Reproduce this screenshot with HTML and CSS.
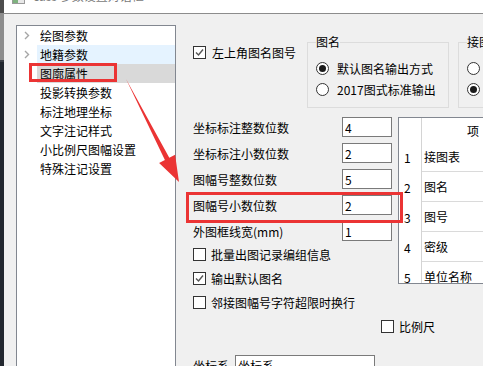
FILE: index.html
```html
<!DOCTYPE html>
<html lang="zh-CN">
<head>
    <meta charset="UTF-8">
    <title>cass 参数设置对话框</title>
    <link rel="stylesheet" href="styles.css">
</head>
<body>

    <div class="screen">
        <!-- desktop taskbar edge -->
        <div class="taskbar">
            <div class="taskbar-top"></div>
            <div class="taskbar-mid"></div>
        </div>

        <div class="window">
            <div class="titlebar">
                <span class="app-icon"></span>
                <span class="title">cass 参数设置对话框</span>
            </div>

            <div class="dialog">
                <!-- Left tree -->
                <ul class="tree">
                    <li><span class="twisty"><svg width="6" height="9" viewBox="0 0 6 9"><polyline points="1,1 4.5,4.5 1,8" fill="none" stroke="#a6a6a6" stroke-width="1.4"/></svg></span><span class="node-label">绘图参数</span></li>
                    <li class="hover"><span class="twisty"><svg width="6" height="9" viewBox="0 0 6 9"><polyline points="1,1 4.5,4.5 1,8" fill="none" stroke="#a6a6a6" stroke-width="1.4"/></svg></span><span class="node-label">地籍参数</span></li>
                    <li class="selected"><span class="twisty"></span><span class="node-label">图廓属性</span></li>
                    <li><span class="twisty"></span><span class="node-label">投影转换参数</span></li>
                    <li><span class="twisty"></span><span class="node-label">标注地理坐标</span></li>
                    <li><span class="twisty"></span><span class="node-label">文字注记样式</span></li>
                    <li><span class="twisty"></span><span class="node-label">小比例尺图幅设置</span></li>
                    <li><span class="twisty"></span><span class="node-label">特殊注记设置</span></li>
                </ul>

                <!-- Settings page -->
                <div class="settings">
                    <div class="top-row">
                        <label class="check corner"><span class="box"><svg width="11" height="11" viewBox="0 0 11 11"><polyline points="2,5.5 4.5,8 9,2.5" fill="none" stroke="#555" stroke-width="1.4"/></svg></span>左上角图名图号</label>

                        <fieldset class="group name-group">
                            <legend>图名</legend>
                            <label class="radio"><span class="dot on"></span>默认图名输出方式</label>
                            <label class="radio"><span class="dot"></span>2017图式标准输出</label>
                        </fieldset>

                        <fieldset class="group join-group">
                            <legend>接图表</legend>
                            <label class="radio"><span class="dot"></span></label>
                            <label class="radio"><span class="dot on"></span></label>
                        </fieldset>
                    </div>

                    <div class="mid">
                        <div class="fields">
                            <div class="num-fields">
                                <div class="field"><span class="field-label">坐标标注整数位数</span><input class="text-input" type="text" value="4" readonly></div>
                                <div class="field"><span class="field-label">坐标标注小数位数</span><input class="text-input" type="text" value="2" readonly></div>
                                <div class="field"><span class="field-label">图幅号整数位数</span><input class="text-input" type="text" value="5" readonly></div>
                                <div class="field"><span class="field-label">图幅号小数位数</span><input class="text-input" type="text" value="2" readonly></div>
                                <div class="field"><span class="field-label">外图框线宽(mm)</span><input class="text-input" type="text" value="1" readonly></div>
                            </div>
                            <div class="checks">
                                <label class="check"><span class="box"></span>批量出图记录编组信息</label>
                                <label class="check"><span class="box"><svg width="11" height="11" viewBox="0 0 11 11"><polyline points="2,5.5 4.5,8 9,2.5" fill="none" stroke="#555" stroke-width="1.4"/></svg></span>输出默认图名</label>
                                <label class="check"><span class="box"></span>邻接图幅号字符超限时换行</label>
                            </div>
                        </div>

                        <div class="table-wrap">
                            <div class="grid">
                                <div class="rn"></div><div class="cell head">项</div>
                                <div class="rn">1</div><div class="cell">接图表</div>
                                <div class="rn">2</div><div class="cell">图名</div>
                                <div class="rn">3</div><div class="cell">图号</div>
                                <div class="rn">4</div><div class="cell">密级</div>
                                <div class="rn">5</div><div class="cell">单位名称</div>
                            </div>
                        </div>
                    </div>

                    <label class="check scale"><span class="box"></span>比例尺</label>

                    <div class="coord-row">
                        <span>坐标系</span>
                        <input class="text-input wide" type="text" value="坐标系" readonly>
                    </div>
                </div>
            </div>
        </div>
    </div>

    <!-- screenshot annotations -->
    <svg class="marks" width="483" height="366" viewBox="0 0 483 366">
        <rect x="30.5" y="64.5" width="85" height="16" fill="none" stroke="#eb3434" stroke-width="3"/>
        <rect x="187.5" y="193.5" width="214" height="28" fill="none" stroke="#eb3434" stroke-width="3"/>
        <polygon points="126,79 169.3,157.8 175.1,154.8 179,182 159.1,163 164.9,160" fill="#eb3434"/>
    </svg>

</body>
</html>
```

FILE: styles.css
```css
/* Global */
* {
    box-sizing: border-box;
}

html, body {
    margin: 0;
    padding: 0;
}

body {
    position: relative;
    width: 483px;
    height: 366px;
    overflow: hidden;
    background-color: #f0f0f0;
    font-family: "Noto Sans CJK SC", "Microsoft YaHei", sans-serif;
    font-size: 12px;
    color: #000;
}

.screen {
    display: flex;
    height: 366px;
}

/* Taskbar edge */
.taskbar {
    flex: none;
    width: 4px;
    background-color: #22272f;
}

.taskbar-top {
    height: 13px;
    background-color: #4d4d4d;
}

.taskbar-mid {
    height: 49px;
    background-color: #8d8d8d;
    border-bottom: 2px solid #3b3f46;
}

/* Window */
.window {
    flex: 1;
    min-width: 0;
    display: flex;
    flex-direction: column;
}

.titlebar {
    flex: none;
    height: 14px;
    padding-left: 8px;
    background-color: #fff;
    border-bottom: 1px solid #8c8c8c;
    display: flex;
    align-items: flex-start;
    overflow: hidden;
}

.app-icon {
    flex: none;
    width: 13px;
    height: 4px;
    border: 1px solid #9a9a9a;
    border-top: none;
    background: linear-gradient(90deg, #7fb27f 0 5px, #e8e8e8 5px);
}

.title {
    margin-left: 8px;
    margin-top: -12px;
    line-height: 16px;
    color: #7a7a7a;
    white-space: nowrap;
}

.dialog {
    flex: 1;
    display: flex;
    padding: 11px 0 0 12px;
    min-height: 0;
}

/* Tree */
.tree {
    flex: none;
    width: 160px;
    height: 360px;
    margin: 0;
    padding: 0;
    list-style: none;
    background-color: #fff;
    border: 1px solid #828790;
}

.tree li {
    display: flex;
    height: 19px;
    line-height: 19px;
    white-space: nowrap;
}

.twisty {
    flex: none;
    width: 20px;
    padding-left: 7px;
    display: flex;
    align-items: center;
}

.twisty svg {
    display: block;
}

.node-label {
    flex: 1;
    padding-left: 3px;
}

.tree li.hover .node-label {
    background-color: #e5f3ff;
}

.tree li.selected .node-label {
    background-color: #d9d9d9;
}

/* Settings page */
.settings {
    flex: 1;
    min-width: 0;
    padding: 9px 0 0 17px;
}

.top-row {
    display: flex;
    align-items: flex-start;
}

.check {
    display: flex;
    align-items: center;
    gap: 5px;
    height: 24px;
    white-space: nowrap;
}

.box {
    flex: none;
    width: 13px;
    height: 13px;
    border: 1px solid #333;
    background-color: #fff;
    display: flex;
    align-items: center;
    justify-content: center;
}

.box svg {
    display: block;
}

.corner {
    flex: none;
    width: 114px;
    height: 16px;
    margin-top: 10px;
    gap: 6px;
}

.group {
    flex: none;
    min-width: 0;
    margin: 0;
    padding: 8px 0 7px 8px;
    border: 1px solid #dcdcdc;
}

.group legend {
    padding: 0;
    line-height: 16px;
    white-space: nowrap;
}

.name-group {
    width: 142px;
}

.join-group {
    width: 120px;
    margin-left: 9px;
}

.radio {
    display: flex;
    align-items: center;
    gap: 8px;
    height: 21px;
    white-space: nowrap;
}

.dot {
    flex: none;
    width: 13px;
    height: 13px;
    border: 1px solid #333;
    border-radius: 50%;
    background-color: #fff;
    display: flex;
    align-items: center;
    justify-content: center;
}

.dot.on::after {
    content: "";
    width: 7px;
    height: 7px;
    border-radius: 50%;
    background-color: #1a1a1a;
}

/* Numeric fields + table */
.mid {
    display: flex;
    align-items: flex-start;
    margin-top: 9px;
}

.fields {
    flex: none;
    width: 199px;
}

.num-fields {
    display: grid;
    row-gap: 6px;
}

.field {
    display: flex;
    align-items: center;
    height: 20px;
}

.field-label {
    flex: none;
    width: 149px;
    white-space: nowrap;
}

.text-input {
    width: 50px;
    height: 20px;
    margin: 0;
    padding: 0 2px;
    border: 1px solid #7a7a7a;
    border-radius: 0;
    background-color: #fff;
    font: inherit;
    line-height: 18px;
    color: #000;
    outline: none;
}

.text-input.wide {
    width: 140px;
}

.checks {
    margin-top: 1px;
}

.table-wrap {
    flex: none;
    width: 140px;
    height: 167px;
    margin-left: 6px;
    background-color: #fff;
    border: 1px solid #828790;
    overflow: hidden;
}

.grid {
    display: grid;
    grid-template-columns: 23px 1fr;
    grid-template-rows: 24px;
    grid-auto-rows: 30px;
}

.rn {
    padding-left: 5px;
    border-right: 1px solid #d4d4d4;
    display: flex;
    align-items: center;
}

.cell {
    padding-left: 2px;
    border-bottom: 1px solid #dadada;
    display: flex;
    align-items: center;
    white-space: nowrap;
}

.cell.head {
    padding-left: 45px;
    border-bottom: none;
}

.scale {
    padding-left: 188px;
}

.coord-row {
    display: flex;
    align-items: center;
    gap: 6px;
    margin-top: 17px;
    white-space: nowrap;
}

/* Annotation layer */
.marks {
    position: absolute;
    top: 0;
    left: 0;
    pointer-events: none;
}
```
